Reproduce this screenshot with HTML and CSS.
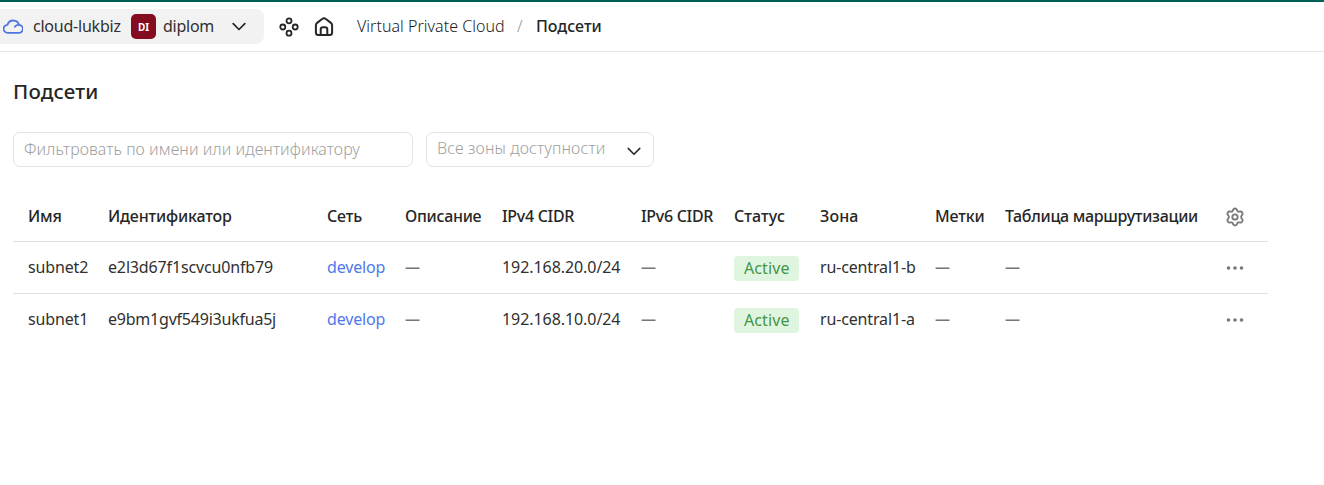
FILE: index.html
```html
<!DOCTYPE html>
<html lang="ru">
<head>
<meta charset="utf-8">
<title>Подсети</title>
<link rel="stylesheet" href="styles.css">
</head>
<body>
<header class="topbar">
  <div class="switcher">
    <svg class="cloud" width="20" height="16" viewBox="0 0 20 16" fill="none" stroke="#4f76e0" stroke-width="1.8" stroke-linecap="round" stroke-linejoin="round"><path d="M4.700 14.800H15.700a3.900 3.900 0 0 0 .5-7.800A6.100 6.100 0 0 0 4.500 6.800a4 4 0 0 0 .2 8zM16.200 7a4.500 4.500 0 0 0-4.300 1.800"/></svg>
    <span class="cloud-name">cloud-lukbiz</span>
    <span class="folder-badge">DI</span>
    <span class="folder-name">diplom</span>
    <svg class="chevron" width="14" height="9" viewBox="0 0 14 9" fill="none" stroke="#262626" stroke-width="1.7" stroke-linecap="round" stroke-linejoin="round"><path d="M1.200 1.700 7 7.500l5.800-5.800"/></svg>
  </div>
  <svg class="services" width="20" height="20" viewBox="0 0 20 20" fill="none" stroke="#262626" stroke-width="1.800"><circle cx="10" cy="3.800" r="2.500"/><circle cx="3.800" cy="10" r="2.500"/><circle cx="16.200" cy="10" r="2.500"/><circle cx="10" cy="16.200" r="2.500"/></svg>
  <svg class="home" width="20" height="20" viewBox="0 0 20 20" fill="none" stroke="#262626" stroke-width="2" stroke-linejoin="round"><path d="M1.900 8.300c0-1 .4-1.800 1.200-2.400l5-3.900a3 3 0 0 1 3.800 0l5 3.900c.8.6 1.200 1.400 1.200 2.400v7.300a2.500 2.500 0 0 1-2.500 2.500H4.400a2.500 2.500 0 0 1-2.500-2.500zM6.700 18v-5.400a2.300 2.300 0 0 1 2.300-2.300h2a2.300 2.300 0 0 1 2.300 2.300V18"/></svg>
  <nav class="crumbs"><span class="crumb">Virtual Private Cloud</span><span class="slash">/</span><span class="current">Подсети</span></nav>
</header>
<main class="page">
  <h1 class="title">Подсети</h1>
  <div class="filters">
    <div class="search">Фильтровать по имени или идентификатору</div>
    <div class="select"><span>Все зоны доступности</span><svg width="14" height="9" viewBox="0 0 14 9" fill="none" stroke="#262626" stroke-width="1.500" stroke-linecap="round" stroke-linejoin="round"><path d="M1.200 1.400 7 7.200l5.800-5.800"/></svg></div>
  </div>
  <table class="subnets">
    <colgroup><col class="c-name"><col class="c-id"><col class="c-net"><col class="c-desc"><col class="c-v4"><col class="c-v6"><col class="c-status"><col class="c-zone"><col class="c-labels"><col class="c-route"><col class="c-menu"></colgroup>
    <thead>
      <tr><th>Имя</th><th>Идентификатор</th><th>Сеть</th><th class="cidr">Описание</th><th class="cidr">IPv4 CIDR</th><th class="cidr">IPv6 CIDR</th><th class="short">Статус</th><th class="short">Зона</th><th>Метки</th><th class="route">Таблица маршрутизации</th>
      <th class="menu"><svg width="20" height="20" viewBox="0 0 20 20" fill="none" stroke="#777" stroke-width="1.800" stroke-linejoin="round"><circle cx="10" cy="10" r="2.700"/><path d="M8.300 2.300Q10 .8 11.700 2.300L12.500 4.200Q13 4.800 13.800 4.700L15.900 4.400Q17.900 5.200 17.600 7.300L16.400 9Q15.900 10 16.400 11L17.600 12.700Q17.900 14.800 15.900 15.600L13.800 15.300Q13 15.200 12.500 15.800L11.700 17.700Q10 19.200 8.300 17.700L7.500 15.800Q7 15.200 6.200 15.300L4.100 15.600Q2.100 14.800 2.400 12.700L3.600 11Q4.100 10 3.600 9L2.400 7.300Q2.100 5.200 4.100 4.400L6.200 4.700Q7 4.800 7.500 4.200z"/></svg></th></tr>
    </thead>
    <tbody>
      <tr><td>subnet2</td><td>e2l3d67f1scvcu0nfb79</td><td><span class="link">develop</span></td><td class="empty">—</td><td class="ip">192.168.20.0/24</td><td class="empty">—</td><td class="state"><span class="status">Active</span></td><td>ru-central1-b</td><td class="empty">—</td><td class="empty">—</td><td class="menu"><svg width="18" height="4" viewBox="0 0 18 4" fill="#777"><circle cx="2.500" cy="2" r="1.800"/><circle cx="9" cy="2" r="1.800"/><circle cx="15.500" cy="2" r="1.800"/></svg></td></tr>
      <tr><td>subnet1</td><td class="ident">e9bm1gvf549i3ukfua5j</td><td><span class="link">develop</span></td><td class="empty">—</td><td class="ip">192.168.10.0/24</td><td class="empty">—</td><td class="state"><span class="status">Active</span></td><td>ru-central1-a</td><td class="empty">—</td><td class="empty">—</td><td class="menu"><svg width="18" height="4" viewBox="0 0 18 4" fill="#777"><circle cx="2.500" cy="2" r="1.800"/><circle cx="9" cy="2" r="1.800"/><circle cx="15.500" cy="2" r="1.800"/></svg></td></tr>
    </tbody>
  </table>
</main>
</body>
</html>
```
FILE: styles.css
```css
* { box-sizing: border-box; }
body { margin: 0; height: 485px; overflow: hidden; background: #fff; color: #303030; font: 400 16px/20px "Noto Sans", "Open Sans", sans-serif; white-space: nowrap; }
svg { display: block; flex: none; }
.topbar { display: flex; align-items: center; height: 52px; border-top: 2px solid #005f56; border-bottom: 1px solid #e5e5e5; }
.switcher { display: flex; align-items: center; width: 264px; height: 35px; padding-left: 3px; background: #f2f2f2; border-radius: 0 8px 8px 0; }
.cloud { margin-bottom: 2px; }
.cloud-name { width: 88px; margin: 0 0 2px 10px; letter-spacing: -0.22px; }
.folder-badge { width: 25px; height: 25px; margin-left: 10px; border-radius: 5px; background: #850b20; color: #fff; font-size: 10px; font-weight: 700; line-height: 27px; text-align: center; }
.folder-name { width: 51px; margin: 0 0 2px 7px; letter-spacing: -0.25px; }
.chevron { margin-left: 18px; }
.services { margin-left: 15px; }
.home { margin-left: 15px; }
.crumbs { display: flex; margin: 0 0 1px 23px; }
.crumb { width: 148px; font-weight: 300; color: #1c1c1c; letter-spacing: 0.03px; }
.slash { width: 8px; margin-left: 12px; color: #909090; font-weight: 300; }
.current { margin-left: 11px; font-weight: 500; color: #262626; }
.page { padding: 27px 0 0 13px; }
.title { margin: 0; color: #262626; font-size: 20.5px; line-height: 24px; font-weight: 500; letter-spacing: 0.2px; }
.filters { display: flex; gap: 13px; margin-top: 29px; }
.search, .select { height: 35px; border: 1px solid #e2e2e2; border-radius: 7px; padding: 0 10px; color: #a0a0a0; font-weight: 300; line-height: 33px; }
.search { width: 400px; letter-spacing: 0.07px; }
.select { display: flex; align-items: flex-start; justify-content: space-between; width: 228px; padding-right: 12px; line-height: 31px; letter-spacing: 0.12px; }
.select svg { margin-top: 14px; }
.subnets { width: 1255px; margin-top: 23px; border-collapse: separate; border-spacing: 0; table-layout: fixed; }
th, td { padding: 0; text-align: left; vertical-align: middle; height: 52px; }
th { color: #262626; font-weight: 500; letter-spacing: -0.15px; }
.cidr, .route { letter-spacing: -0.3px; }
.short { letter-spacing: 0.1px; }
td { padding-bottom: 2px; letter-spacing: -0.15px; }
.ident { letter-spacing: -0.22px; }
.ip { letter-spacing: -0.07px; }
th:first-child, td:first-child { padding-left: 15px; }
thead th, tbody tr:first-child td { border-bottom: 1px solid #e0e0e0; }
.c-name { width: 95px; } .c-id { width: 219px; } .c-net { width: 78px; } .c-desc { width: 97px; }
.c-v4 { width: 139px; } .c-v6 { width: 93px; } .c-status { width: 86px; } .c-zone { width: 115px; }
.c-labels { width: 70px; } .c-route { width: 220px; } .c-menu { width: 43px; }
.link { color: #4e79eb; }
.empty { padding-bottom: 4px; color: #777; font-size: 15px; font-weight: 700; }
.state { padding: 2px 0 0; }
tbody tr:last-child .state { padding-top: 0; }
td.menu { padding: 0 0 0 1px; }
th.menu { padding-top: 2px; }
.status { display: block; width: 65px; height: 25px; padding-left: 10px; border-radius: 4px; background: #e0f5e0; color: #449647; line-height: 25px; letter-spacing: 0.1px; }
```
